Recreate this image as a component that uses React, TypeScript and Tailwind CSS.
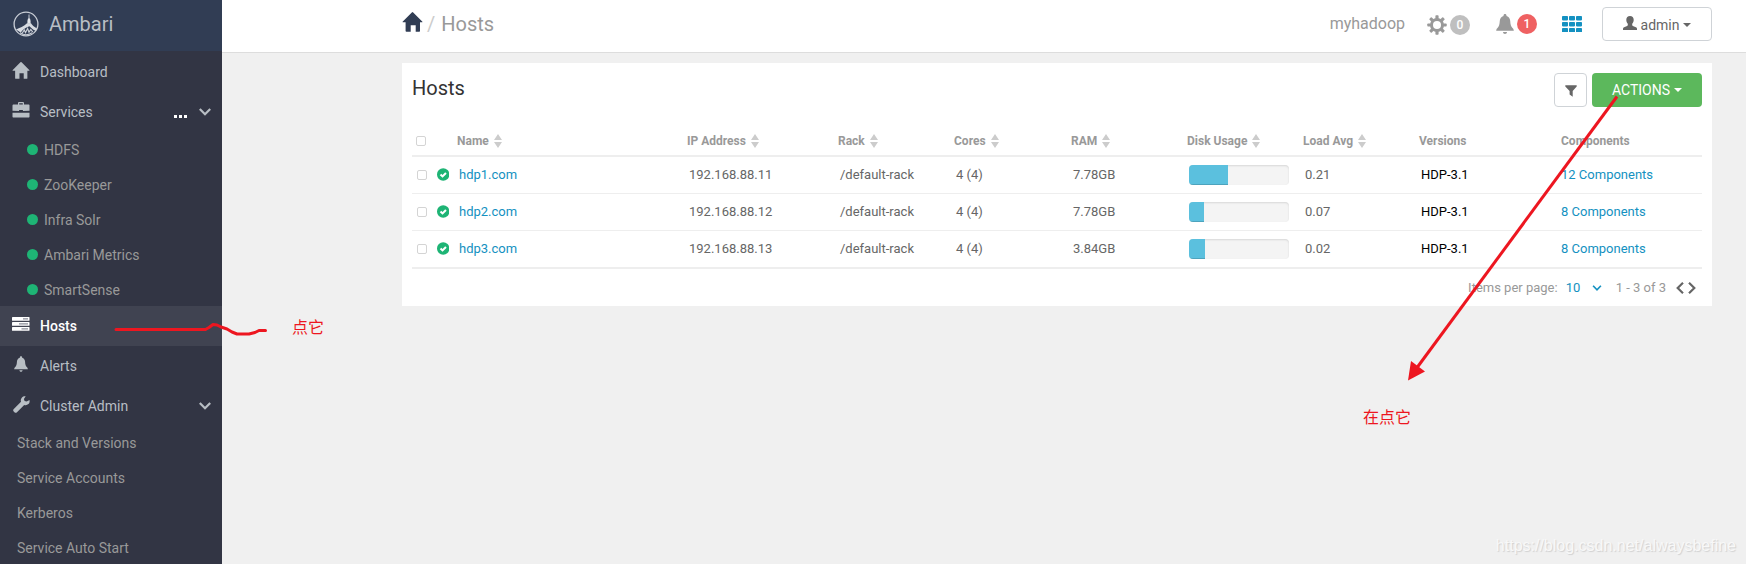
import React from "react";

type IconProps = { className?: string };

const HomeIcon = ({ className }: IconProps) => (
  <svg viewBox="0 0 20 20" className={className} fill="currentColor" aria-hidden="true">
    <path d="M9.3.4a1 1 0 0 1 1.4 0L19.7 9.4c.4.4.3.9-.3.9h-1.9V19c0 .6-.2.8-.7.8h-3.6v-6.6H8.2v6.6H3.9c-.5 0-.8-.3-.8-.8v-8.7H.6c-.6 0-.7-.5-.3-.9z" />
  </svg>
);

const BriefcaseIcon = ({ className }: IconProps) => (
  <svg viewBox="0 0 18 16" className={className} fill="currentColor" aria-hidden="true">
    <path
      fillRule="evenodd"
      d="M6 2.6V1.2C6 .5 6.500 0 7.200 0h3.600C11.500 0 12 .5 12 1.200v1.400h4.600c.5 0 .9.4.9 1v5.200l-6.600 0.200V8H7.100v1L.5 8.800V3.600c0-.6.4-1 .9-1zM7.200 2.600h3.600V1.300H7.200zM.5 10.800h17v3.700c0 .6-.4 1-.9 1H1.400c-.5 0-.9-.4-.9-1z"
    />
  </svg>
);

const TasksIcon = ({ className }: IconProps) => (
  <svg viewBox="0 0 18 14" className={className} aria-hidden="true">
    <g fill="currentColor">
      <rect x="0" y="0" width="17.500" height="3.800" rx=".6" />
      <rect x="0" y="5" width="17.500" height="3.800" rx=".6" />
      <rect x="0" y="10" width="17.500" height="3.800" rx=".6" />
    </g>
    <g fill="#6f7280">
      <rect x="11" y="1.400" width="5" height="1" />
      <rect x="7" y="6.400" width="9" height="1" />
      <rect x="9.500" y="11.400" width="6.500" height="1" />
    </g>
  </svg>
);

const BellIcon = ({ className }: IconProps) => (
  <svg viewBox="0 0 18 20" className={className} fill="currentColor" aria-hidden="true">
    <path d="M9 0c.9 0 1.500.6 1.500 1.500v.4c2.300.7 3.500 2.500 3.700 4.900.2 3.700.8 5.700 2.300 7.200.8.8 1.300 1.500 1.300 2.700H.2c0-1.200.5-1.900 1.300-2.700C3 12.500 3.600 10.500 3.800 6.800 4 4.400 5.200 2.600 7.500 1.900v-.4C7.500.6 8.100 0 9 0zM7 18h4c0 1.200-.9 1.900-2 1.900S7 19.200 7 18z" />
  </svg>
);

const WrenchIcon = ({ className }: IconProps) => (
  <svg viewBox="0 0 17 17" className={className} fill="currentColor" aria-hidden="true">
    <path d="M12.700.3 10.900 3.100l.7 1.900 2 .6 2.900-1.700c.4 2-.1 3.300-1.100 4.200-1.200 1.100-2.700 1.300-4.200.8L4 16.200c-.7.7-1.600.8-2.300.3L.5 15.300c-.5-.7-.4-1.600.3-2.300L8 5.800C7.600 4.300 7.700 2.900 8.800 1.700 9.800.6 11.100.1 12.700.3z" />
  </svg>
);

const Chevron = ({ className }: IconProps) => (
  <svg viewBox="0 0 12 8" className={className} fill="none" stroke="currentColor" strokeWidth="2.200" aria-hidden="true">
    <path d="M.8 1 6 6.300 11.200 1" />
  </svg>
);

const GearIcon = ({ className }: IconProps) => (
  <svg viewBox="0 0 20 20" className={className} aria-hidden="true">
    <g fill="currentColor">
      <rect x="8.400" y=".3" width="3.200" height="19.400" rx=".8" />
      <rect x="8.400" y=".3" width="3.200" height="19.400" rx=".8" transform="rotate(45 10 10)" />
      <rect x="8.400" y=".3" width="3.200" height="19.400" rx=".8" transform="rotate(90 10 10)" />
      <rect x="8.400" y=".3" width="3.200" height="19.400" rx=".8" transform="rotate(135 10 10)" />
      <circle cx="10" cy="10" r="7" />
    </g>
    <circle cx="10" cy="10" r="4" fill="#fff" />
  </svg>
);

const GridIcon = ({ className }: IconProps) => (
  <svg viewBox="0 0 20 16" className={className} fill="currentColor" aria-hidden="true">
    {[0, 7, 14].map((x) =>
      [0, 6, 12].map((y) => <rect key={`${x}-${y}`} x={x} y={y} width="6" height="4.400" rx=".8" />),
    )}
  </svg>
);

const UserIcon = ({ className }: IconProps) => (
  <svg viewBox="0 0 14 14" className={className} fill="currentColor" aria-hidden="true">
    <path d="M7 0c2.300 0 3.700 1.500 3.700 3.800 0 1.700-.6 3-1.500 4v1.300c0 .5.2.8.7 1l3 1.100c.7.3 1.100.8 1.100 1.500v1.300H0v-1.300c0-.7.4-1.200 1.100-1.500l3-1.100c.5-.2.7-.5.7-1V7.800c-.9-1-1.500-2.300-1.500-4C3.300 1.500 4.700 0 7 0z" />
  </svg>
);

const FilterIcon = ({ className }: IconProps) => (
  <svg viewBox="0 0 12 12" className={className} fill="currentColor" aria-hidden="true">
    <path d="M.3.300h11.400v1.200L7.700 6v5.700L4.600 9.600V6L.3 1.500z" />
  </svg>
);

const Caret = ({ className }: IconProps) => (
  <svg viewBox="0 0 8 4" className={className} fill="currentColor" aria-hidden="true">
    <path d="M0 0h8L4 4z" />
  </svg>
);

const SortIcon = () => (
  <svg viewBox="0 0 8 14" className="h-[14px] w-2 text-[#cccccc]" fill="currentColor" aria-hidden="true">
    <path d="M4 0 8 6H0zM4 14 0 8h8z" />
  </svg>
);

const HealthyIcon = () => (
  <svg viewBox="0 0 13 13" className="mb-[2px] h-[13px] w-[13px]" role="img" aria-label="Healthy">
    <circle cx="6.500" cy="6.500" r="6.500" fill="#1eb475" />
    <path d="M3.700 6.500 5.800 8.500 9.400 4.900" fill="none" stroke="#fff" strokeWidth="2.200" />
  </svg>
);

const AmbariLogo = () => (
  <svg viewBox="0 0 26 26" className="h-[26px] w-[26px]" fill="none" aria-hidden="true">
    <circle cx="13" cy="13" r="11.900" stroke="#c9ced6" strokeWidth="1.300" />
    <path d="M16 3.500v5" stroke="#c9ced6" strokeWidth="1" />
    <path d="M15 7.500h2l.6 2.500v2.800h-3.200V10z" fill="#e3e6ea" />
    <path
      d="M14 12.300h4c.8 1.700 3.300 3.800 6 5.200l-1.200 2.300c-3-1.200-4.600-2.800-6.300-4.600-2.500.6-6 2.600-8.800 6.300L3 18.600c3.300-1.600 8.300-3.400 11-6.300z"
      fill="#d7dbe1"
    />
    <path d="M9 22.500 11.300 19l1.200 2.700 2.100-4.200 1.400 3.700 1.800-2.700 2 2.600M7 21.700c3.500 2.700 8.500 2.700 12 0" stroke="#c9ced6" strokeWidth="1.200" />
  </svg>
);

const services = ["HDFS", "ZooKeeper", "Infra Solr", "Ambari Metrics", "SmartSense"];
const adminPages = ["Stack and Versions", "Service Accounts", "Kerberos", "Service Auto Start"];

type NavItemProps = { icon: React.ReactNode; label: string; active?: boolean; children?: React.ReactNode };

function NavItem({ icon, label, active, children }: NavItemProps) {
  return (
    <div className={active ? "flex h-10 items-center bg-[#404351] pr-[11px] pl-3 text-white" : "flex h-10 items-center pr-[11px] pl-3 text-[#b8bec4]"}>
      <a href="#" className="flex flex-1 items-center gap-[10px]">
        <span className="mb-1 flex w-[18px] justify-center">{icon}</span>
        <span className={active ? "font-medium" : ""}>{label}</span>
      </a>
      {children}
    </div>
  );
}

function Sidebar() {
  return (
    <aside className="w-[222px] shrink-0 overflow-hidden bg-[#323544] text-sm">
      <a href="#" className="flex h-[51px] items-center gap-[10px] bg-[#313d54] pb-1 pl-[13px] text-xl text-[#b8bec4]">
        <AmbariLogo />
        <span>Ambari</span>
      </a>
      <nav className="pt-px">
        <NavItem icon={<HomeIcon className="h-[17px] w-[18px]" />} label="Dashboard" />
        <NavItem icon={<BriefcaseIcon className="h-4 w-[18px]" />} label="Services">
          <button type="button" aria-label="Service actions" className="mt-2 mr-3 flex gap-[2px]">
            <span className="h-[3px] w-[3px] bg-white" />
            <span className="h-[3px] w-[3px] bg-white" />
            <span className="h-[3px] w-[3px] bg-white" />
          </button>
          <button type="button" aria-label="Toggle services">
            <Chevron className="h-2 w-3" />
          </button>
        </NavItem>
        <ul className="-mb-px">
          {services.map((s) => (
            <li key={s}>
              <a href="#" className="flex h-[35px] items-center gap-[6px] pl-[27px] text-[#999999]">
                <span className="h-[11px] w-[11px] rounded-full bg-[#1eb475]" />
                {s}
              </a>
            </li>
          ))}
        </ul>
        <NavItem icon={<TasksIcon className="h-[14px] w-[18px]" />} label="Hosts" active />
        <NavItem icon={<BellIcon className="h-4 w-[14px]" />} label="Alerts" />
        <NavItem icon={<WrenchIcon className="h-[17px] w-[17px]" />} label="Cluster Admin">
          <button type="button" aria-label="Toggle cluster admin">
            <Chevron className="h-2 w-3" />
          </button>
        </NavItem>
        <ul className="-mt-px">
          {adminPages.map((p) => (
            <li key={p}>
              <a href="#" className="flex h-[35px] items-center pl-[17px] text-[#999999]">
                {p}
              </a>
            </li>
          ))}
        </ul>
      </nav>
    </aside>
  );
}

function TopBar() {
  return (
    <header className="flex h-[53px] items-center justify-between border-b border-[#dddddd] bg-white pb-1 pl-[180px] pr-[34px]">
      <div className="flex items-center text-xl text-[#999999]">
        <a href="#" aria-label="Home">
          <HomeIcon className="mb-1 h-5 w-[21px] text-[#313d54]" />
        </a>
        <span className="mx-1 text-[#cccccc]">/</span>
        <span className="ml-[2px]">Hosts</span>
      </div>
      <div className="flex items-center text-[#999999]">
        <span>myhadoop</span>
        <button type="button" aria-label="Background operations" className="mt-[2px] ml-[22px] flex items-center gap-[3px]">
          <GearIcon className="h-5 w-5" />
          <span className="flex h-5 w-5 items-center justify-center rounded-full bg-[#bfbfbf] text-xs font-medium text-white">0</span>
        </button>
        <button type="button" aria-label="Alerts" className="ml-[26px] flex items-center gap-[3px]">
          <BellIcon className="h-5 w-[18px]" />
          <span className="flex h-5 w-5 items-center justify-center rounded-full bg-[#ef6162] text-xs font-medium text-white">1</span>
        </button>
        <button type="button" aria-label="Views" className="ml-[25px]">
          <GridIcon className="h-4 w-5 text-[#1491c1]" />
        </button>
        <button type="button" className="ml-5 flex h-[34px] w-[110px] items-center justify-center rounded border border-[#cfd3d7] bg-white pt-[2px] text-sm text-[#666666]">
          <UserIcon className="mr-1 mb-1 h-[14px] w-[14px]" />
          admin
          <Caret className="ml-1 h-1 w-2" />
        </button>
      </div>
    </header>
  );
}

const columns = [
  { label: "Name", sortable: true },
  { label: "IP Address", sortable: true },
  { label: "Rack", sortable: true },
  { label: "Cores", sortable: true },
  { label: "RAM", sortable: true },
  { label: "Disk Usage", sortable: true },
  { label: "Load Avg", sortable: true },
  { label: "Versions", sortable: false },
  { label: "Components", sortable: false },
];

const hosts = [
  { name: "hdp1.com", ip: "192.168.88.11", ram: "7.78GB", disk: 39, load: "0.21", components: 12 },
  { name: "hdp2.com", ip: "192.168.88.12", ram: "7.78GB", disk: 15, load: "0.07", components: 8 },
  { name: "hdp3.com", ip: "192.168.88.13", ram: "3.84GB", disk: 16, load: "0.02", components: 8 },
];

const checkbox = "block h-[10px] w-[10px] appearance-none rounded-xs border border-[#d4d4d4] bg-white checked:bg-[#1491c1]";

function HostsTable() {
  return (
    <table className="mt-5 w-full table-fixed border-separate border-spacing-0 text-left text-[13px] text-[#666666]">
      <colgroup>
        <col className="w-[37px]" />
        <col className="w-[230px]" />
        <col className="w-[151px]" />
        <col className="w-[116px]" />
        <col className="w-[117px]" />
        <col className="w-[116px]" />
        <col className="w-[116px]" />
        <col className="w-[116px]" />
        <col className="w-[142px]" />
        <col className="w-[149px]" />
      </colgroup>
      <thead>
        <tr className="text-xs text-[#999999]">
          <th className="h-[30px] border-b-2 border-[#eeeeee] pl-1">
            <input type="checkbox" aria-label="Select all hosts" className={checkbox} />
          </th>
          {columns.map((c) => (
            <th key={c.label} className="h-[30px] border-b-2 border-[#eeeeee] pl-2 font-bold">
              <span className="flex items-center gap-[5px]">
                {c.label}
                {c.sortable && <SortIcon />}
              </span>
            </th>
          ))}
        </tr>
      </thead>
      <tbody>
        {hosts.map((h) => (
          <tr key={h.name} className="[&>td]:h-[37px] [&>td]:border-b [&>td]:border-[#eeeeee] [&>td]:pl-[10px] last:[&>td]:h-[38px] last:[&>td]:border-b-2 [&>td:last-child]:pl-2">
            <td>
              <span className="-ml-[5px] flex items-center gap-[10px]">
                <input type="checkbox" aria-label={`Select ${h.name}`} className={checkbox} />
                <HealthyIcon />
              </span>
            </td>
            <td>
              <a href="#" className="text-[#1491c1]">{h.name}</a>
            </td>
            <td>{h.ip}</td>
            <td>/default-rack</td>
            <td>4 (4)</td>
            <td>{h.ram}</td>
            <td>
              <div className="h-5 w-[100px] overflow-hidden rounded bg-[#f4f4f4] shadow-[inset_0_1px_2px_rgba(0,0,0,0.12)]">
                <div className="h-full bg-[#5bc0de] shadow-[inset_0_-1px_0_rgba(0,0,0,0.15)]" style={{ width: `${h.disk}%` }} />
              </div>
            </td>
            <td>{h.load}</td>
            <td className="text-black">HDP-3.1</td>
            <td>
              <a href="#" className="text-[#1491c1]">{h.components} Components</a>
            </td>
          </tr>
        ))}
      </tbody>
    </table>
  );
}

function Pagination() {
  return (
    <div className="flex h-[37px] items-center justify-end pr-1 text-[13px] text-[#999999]">
      <label htmlFor="page-size">Items per page:</label>
      <span className="ml-2 flex items-center text-[#1491c1]">
        <select id="page-size" defaultValue="10" className="w-[26px] appearance-none bg-transparent outline-none">
          <option>10</option>
          <option>25</option>
          <option>50</option>
        </select>
        <Chevron className="h-[6px] w-[10px]" />
      </span>
      <span className="mr-2 ml-[14px]">1 - 3 of 3</span>
      <button type="button" aria-label="Previous page" className="text-[#666666]">
        <Chevron className="h-2 w-3 rotate-90" />
      </button>
      <button type="button" aria-label="Next page" className="text-[#666666]">
        <Chevron className="h-2 w-3 -rotate-90" />
      </button>
    </div>
  );
}

export default function App() {
  return (
    <div className="relative flex h-screen overflow-hidden bg-[#f0f0f0] font-[Roboto,'Noto_Sans_CJK_SC',sans-serif]">
      <Sidebar />
      <div className="min-w-0 flex-1">
        <TopBar />
        <main className="pt-[10px] pr-[34px] pl-[180px]">
          <section className="bg-white px-[10px] pt-[10px]">
            <div className="flex h-[34px] items-center justify-between">
              <h1 className="mb-1 text-xl text-[#333333]">Hosts</h1>
              <div className="flex gap-[5px]">
                <button type="button" aria-label="Filter hosts" className="flex h-[34px] w-[33px] items-center justify-center rounded border border-[#cfd3d7] bg-white text-[#666666]">
                  <FilterIcon className="mt-[2px] h-3 w-3" />
                </button>
                <button type="button" className="flex h-[34px] w-[110px] items-center justify-center gap-1 rounded bg-[#5cb85c] text-sm text-white">
                  ACTIONS
                  <Caret className="h-1 w-2" />
                </button>
              </div>
            </div>
            <HostsTable />
            <Pagination />
          </section>
        </main>
      </div>

      <svg viewBox="0 0 154 14" className="pointer-events-none absolute top-[322px] left-[114px] h-[14px] w-[154px]" fill="none" stroke="#ed1620" strokeWidth="3" strokeLinecap="round" strokeLinejoin="round" aria-hidden="true">
        <path d="M2 7.500H91.500L95 5.500 99 2.500 103 3 107 5 113 7 118 10 123 12 H135L141 10.500 145 8.500H151.500" />
      </svg>
      <p className="pointer-events-none absolute top-[314px] left-[292px] font-['Noto_Sans_CJK_SC',sans-serif] text-base text-[#ed1620]">点它</p>

      <svg viewBox="0 0 214 288" className="pointer-events-none absolute top-[94px] right-[126px] h-[288px] w-[214px]" aria-hidden="true">
        <path d="M211 2.500 10 275" stroke="#ed1620" strokeWidth="3" />
        <path d="M2 286.500 5 267 19 277.500z" fill="#ed1620" />
      </svg>
      <p className="pointer-events-none absolute top-[404px] right-[335px] font-['Noto_Sans_CJK_SC',sans-serif] text-base text-[#ed1620]">在点它</p>

      <p className="pointer-events-none absolute right-[10px] bottom-[6px] font-['Liberation_Sans',sans-serif] text-base text-[#f8f8f8] [text-shadow:1px_1px_1px_#d0d0d0]">
        https://blog.csdn.net/alwaysbefine
      </p>
    </div>
  );
}
